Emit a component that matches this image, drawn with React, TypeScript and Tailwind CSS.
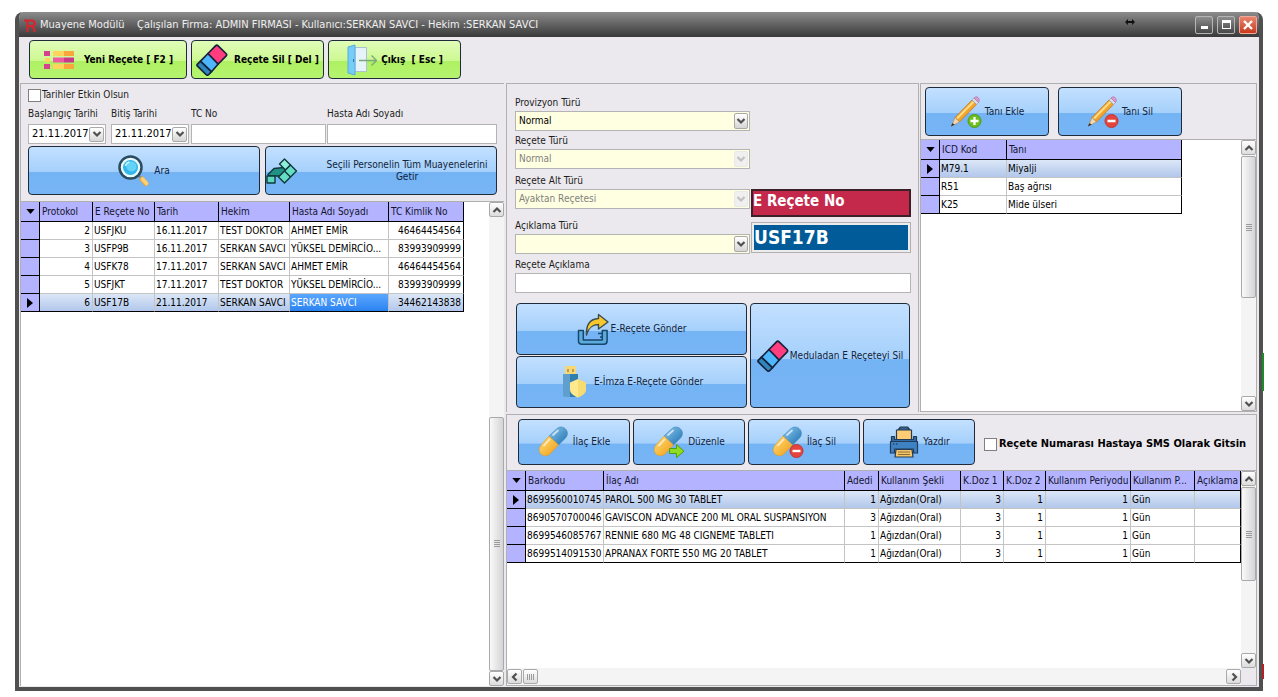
import { useId, type ReactNode } from "react";

const blueFill =
  "bg-[linear-gradient(180deg,#c3e0ff_0%,#a5d0fb_53%,#74b3f4_54%,#77b5f5_100%)]";
const greenFill =
  "bg-[linear-gradient(180deg,#e0fdb8_0%,#cdf892_53%,#aef062_54%,#b6f470_100%)]";

function GlossButton({
  icon,
  children,
  className = "",
  green = false,
}: {
  icon: ReactNode;
  children: ReactNode;
  className?: string;
  green?: boolean;
}) {
  return (
    <button
      type="button"
      className={`flex items-center justify-center rounded border border-[#1d2b3a] ${
        green ? greenFill + " font-bold text-black" : blueFill + " text-[#10233b]"
      } ${className}`}
    >
      {icon}
      {children}
    </button>
  );
}

function Chevron({ dir = "down", faded = false }: { dir?: "up" | "down" | "left" | "right"; faded?: boolean }) {
  const d = {
    down: "M1.5 3l3.5 3.5L8.500 3",
    up: "M1.5 7l3.500-3.500L8.500 7",
    left: "M6.500 1.500L3 5l3.500 3.500",
    right: "M3.500 1.500L7 5l-3.500 3.500",
  }[dir];
  return (
    <svg viewBox="0 0 10 10" className="size-[10px]" fill="none" stroke={faded ? "#c0c0c0" : "#505050"} strokeWidth="2.2">
      <path d={d} />
    </svg>
  );
}

function ScrollButton({ dir }: { dir: "up" | "down" | "left" | "right" }) {
  return (
    <button
      type="button"
      aria-label={dir}
      className="flex size-[15px] shrink-0 items-center justify-center rounded-xs border border-[#a9a9a9] bg-linear-to-b from-white to-[#dcdcdc]"
    >
      <Chevron dir={dir} />
    </button>
  );
}

function VScroll({ before, thumb }: { before: string; thumb: string }) {
  return (
    <div className="flex w-[15px] shrink-0 flex-col bg-[#f4f4f5]">
      <ScrollButton dir="up" />
      <div className={before} />
      <div
        className={`flex flex-col items-center justify-center gap-px rounded-xs border border-[#a9a9a9] bg-linear-to-r from-[#fafafa] to-[#d4d4d6] ${thumb}`}
      >
        <i className="h-px w-[6px] bg-[#9a9a9a]" />
        <i className="h-px w-[6px] bg-[#9a9a9a]" />
        <i className="h-px w-[6px] bg-[#9a9a9a]" />
        <i className="h-px w-[6px] bg-[#9a9a9a]" />
      </div>
      <div className="mt-auto">
        <ScrollButton dir="down" />
      </div>
    </div>
  );
}

type Column = { title: string; width: string; right?: boolean };

function DataGrid({
  columns,
  rows,
  current,
  focused = -1,
  className,
}: {
  columns: Column[];
  rows: string[][];
  current: number;
  focused?: number;
  className: string;
}) {
  return (
    <table className={`table-fixed border-separate border-spacing-0 text-black ${className}`}>
      <colgroup>
        <col className="w-[19px]" />
        {columns.map((c) => (
          <col key={c.title} className={c.width} />
        ))}
      </colgroup>
      <thead>
        <tr className="h-5 bg-[#b3b3ff] text-left text-[#14142e]">
          <th className="border-r border-b border-black p-0" aria-label="Menu">
            <svg viewBox="0 0 10 6" className="mx-auto h-[5px] w-[9px]">
              <path d="M0 0h10L5 6z" />
            </svg>
          </th>
          {columns.map((c) => (
            <th key={c.title} className="overflow-hidden border-r border-b border-black py-0 pr-0 pl-[2px] font-normal whitespace-nowrap">
              {c.title}
            </th>
          ))}
        </tr>
      </thead>
      <tbody>
        {rows.map((row, r) => {
          const last = r === rows.length - 1;
          const line = last ? "border-b-black" : "border-b-[#c4c4c4]";
          return (
            <tr
              key={r}
              className={`h-[18px] ${r === current ? "bg-linear-to-b from-[#dce7f7] to-[#afc5ea]" : "bg-white"}`}
            >
              <td className="border-r border-b border-black bg-[#b3b3ff] p-0">
                {r === current && (
                  <svg viewBox="0 0 6 10" className="mx-auto h-[10px] w-[6px]">
                    <path d="M0 0l6 5-6 5z" />
                  </svg>
                )}
              </td>
              {row.map((v, i) => (
                <td
                  key={i}
                  className={`overflow-hidden border-r border-b py-0 pl-px whitespace-nowrap ${line} ${
                    i === row.length - 1 ? "border-r-black" : "border-r-[#c4c4c4]"
                  } ${columns[i].right ? "pr-[2px] text-right" : "pr-0"} ${
                    r === current && i === focused ? "bg-linear-to-b from-[#5aa7ff] to-[#2a83f0] text-white" : ""
                  }`}
                >
                  {v}
                </td>
              ))}
            </tr>
          );
        })}
      </tbody>
    </table>
  );
}

function DateField({ label }: { label: string }) {
  const id = useId();
  return (
    <div className="flex w-[78px] flex-col gap-[2px]">
      <label htmlFor={id} className="whitespace-nowrap leading-4">
        {label}
      </label>
      <div className="flex h-5 items-center border border-[#b4b4b4] bg-white pr-px">
        <input id={id} defaultValue="21.11.2017" className="w-0 flex-1 pl-[3px] text-[11px] text-black outline-none" />
        <button
          type="button"
          aria-label={label + " seç"}
          className="flex size-[15px] items-center justify-center rounded-xs border border-[#a9a9a9] bg-linear-to-b from-white to-[#d6d6d6]"
        >
          <Chevron />
        </button>
      </div>
    </div>
  );
}

function TextField({ label, className = "gap-[2px]" }: { label: string; className?: string }) {
  const id = useId();
  return (
    <div className={`flex flex-col ${className}`}>
      <label htmlFor={id} className="leading-4">
        {label}
      </label>
      <input id={id} className="h-5 w-full border border-[#b4b4b4] bg-white px-1 outline-none" />
    </div>
  );
}

function Combo({ label, value, disabled = false }: { label: string; value: string; disabled?: boolean }) {
  const id = useId();
  return (
    <div className="flex flex-col">
      <label htmlFor={id} className="leading-4">
        {label}
      </label>
      <div className="relative">
        <select
          id={id}
          disabled={disabled}
          defaultValue={value}
          className="block h-5 w-full appearance-none border border-[#b4b4b4] bg-[#ffffe1] pl-[3px] text-black opacity-100 outline-none disabled:text-[#7f7f7f]"
        >
          <option value={value}>{value}</option>
        </select>
        <span
          className={`pointer-events-none absolute top-[2px] right-[2px] flex h-4 w-[14px] items-center justify-center rounded-xs border ${
            disabled ? "border-[#e8e8e8] bg-[#f0f0f0]" : "border-[#a9a9a9] bg-linear-to-b from-white to-[#d6d6d6]"
          }`}
        >
          <Chevron faded={disabled} />
        </span>
      </div>
    </div>
  );
}

function ListIcon() {
  return (
    <svg viewBox="0 0 32 20" className="h-5 w-8 shrink-0">
      <path fill="#d6418f" d="M1 1h6v5H1zM1 14h6v5H1z" />
      <path fill="#ffd45c" d="M2 8h5v4H2zM10 1h11v5H10zM10 14h11v5H10z" />
      <path fill="#f9a63a" d="M21 1h10v5H21zM21 14h10v5H21z" />
      <path fill="#ef5ba1" d="M10 7.500h11v5H10z" />
      <path fill="#c9388b" d="M21 7.500h10v5H21z" />
    </svg>
  );
}

function EraserIcon() {
  return (
    <svg viewBox="0 0 32 32" className="size-8 shrink-0" stroke="#16213a" strokeWidth="1.700" strokeLinejoin="round">
      <path fill="#2f86bd" d="M4.500 17.200l-3 3c-.6.600-.6 1.400 0 2l8.500 8.300c.8.800 2 .8 2.800 0l2.700-2.800z" />
      <path fill="#4eb5ff" d="M12 9.500L4.500 17.200l11 10.500L22.200 20z" />
      <path fill="#ff3d7f" d="M12 9.500l7.500-7.700c.8-.8 1.800-.8 2.600 0l7.900 7.700c.8.800.8 1.800 0 2.600L22.200 20z" />
    </svg>
  );
}

function DoorIcon() {
  return (
    <svg viewBox="0 0 32 32" className="size-8 shrink-0">
      <path fill="#e6f3f8" stroke="#a9c4d0" d="M9 3.500h11.500v24H9z" />
      <path fill="#76cdf8" stroke="#58abdb" d="M2 3l7-2v30l-7-2z" />
      <path stroke="#31789f" d="M7.500 15v3" />
      <path fill="none" stroke="#7da877" strokeWidth="1.400" d="M13 16.500h17M25.500 11.500l5 5-5 5" />
    </svg>
  );
}

function SearchIcon() {
  return (
    <svg viewBox="0 0 32 32" className="size-8 shrink-0">
      <path stroke="#e7a940" strokeWidth="5" strokeLinecap="round" d="M24 24l4 4.500" />
      <path stroke="#ffd177" strokeWidth="3.500" strokeLinecap="round" d="M24.500 24l4 4.500" />
      <path stroke="#7890a0" strokeWidth="3" d="M19 19l3.500 3.500" />
      <circle cx="12.500" cy="12.500" r="11" fill="#e9fbff" stroke="#2b4c60" strokeWidth="2.500" />
      <circle cx="12.500" cy="12.500" r="7.500" fill="#35b7ea" />
      <circle cx="13.500" cy="11.500" r="5" fill="#65d3f8" />
      <path d="M7.500 11c.5-2.500 2-3.500 4-4" fill="none" stroke="#c9f2ff" strokeWidth="1.500" />
    </svg>
  );
}

function BlocksIcon() {
  return (
    <svg viewBox="0 0 32 26" className="h-[26px] w-8 shrink-0" stroke="#11383b" strokeWidth="1.400" strokeLinejoin="round">
      <path fill="#209184" d="M8 10.500L18 9.500l2 3-5.500 5.500H3l-1-1.500z" />
      <path fill="#5bd8bd" d="M1 18h8v7H1z" />
      <path fill="#8bf0da" d="M13.500 6l5-5 6 6-5 5z" />
      <path fill="#64ddc3" d="M24.500 7l6 6-12 12-6-6z" />
      <path fill="none" d="M18.500 13l6 6" />
    </svg>
  );
}

function ShareIcon() {
  return (
    <svg viewBox="0 0 32 32" className="size-8 shrink-0" strokeLinejoin="round">
      <path fill="#5cabdf" stroke="#174769" strokeWidth="1.500" d="M1.500 17.500h4.800V27h19v-9.500h4.800V28c0 2-1.200 3.200-3.200 3.200H5c-2.200 0-3.500-1.200-3.500-3.200z" />
      <path fill="none" stroke="#174769" strokeWidth="1.300" d="M21 20.500h4M23 24h2.500" />
      <path fill="#f7c72d" stroke="#3d4d4f" strokeWidth="1.400" d="M9.500 22C9 12 13 6 21.500 5.500V1.500L31 9l-9.500 7v-4.500C15.500 11.500 12 14 9.500 22z" />
    </svg>
  );
}

function UsbShieldIcon() {
  return (
    <svg viewBox="0 0 32 32" className="size-8 shrink-0">
      <path fill="#f4d776" d="M5 0h11v9H5z" />
      <path fill="#c39b52" d="M7 3h2v3H7zM12 3h2v3h-2z" />
      <path fill="#5f9fce" d="M3 8h7v23H5c-1 0-2-1-2-2z" />
      <path fill="#2f7eac" d="M10 8h8v23h-8z" />
      <path fill="#f6dc71" d="M18 13l8 3.500v7c0 4-4 6.500-8 8z" />
      <path fill="#ffe98e" d="M18 13l-8 3.500v7c0 4 4 6.500 8 8z" />
    </svg>
  );
}

function MinusBadge() {
  return (
    <g>
      <circle cx="24.500" cy="25" r="6.500" fill="#e5443c" stroke="#c13430" />
      <path stroke="#fff" strokeWidth="2.400" d="M20.500 25h8" />
    </g>
  );
}

function PillIcon({ badge }: { badge?: "edit" | "minus" }) {
  const id = useId();
  return (
    <svg viewBox="0 0 32 32" className="size-8 shrink-0">
      <defs>
        <linearGradient id={id + "b"} x1="0" y1="0" x2="1" y2="1">
          <stop offset="0" stopColor="#8ec9f0" />
          <stop offset="1" stopColor="#1b6fae" />
        </linearGradient>
        <linearGradient id={id + "y"} x1="0" y1="0" x2="1" y2="1">
          <stop offset="0" stopColor="#ffe07a" />
          <stop offset="1" stopColor="#f09a14" />
        </linearGradient>
      </defs>
      <path fill={"url(#" + id + "b)"} stroke="#3f83b5" strokeWidth=".600" d="M11 10l7.500-7c3-2.700 6.500-2.500 9 0 2.600 2.600 2.600 6.200 0 9L20.500 19z" />
      <path fill={"url(#" + id + "y)"} stroke="#d99a2c" strokeWidth=".600" d="M11 10l9.500 9-8 8.500c-2.800 2.900-7 3-9.500.5s-2.300-6.500.5-9.500z" />
      <path stroke="#fff" strokeOpacity=".650" strokeWidth="1.800" strokeLinecap="round" d="M6 19.500l5.500-6M15 9l5-4.500" />
      {badge === "minus" && <MinusBadge />}
      {badge === "edit" && (
        <path fill="#8fdc25" stroke="#579b10" d="M16.500 22.500h7v-4l7.500 6.700-7.500 6.300v-4h-7z" />
      )}
    </svg>
  );
}

function PencilIcon({ badge }: { badge: "plus" | "minus" }) {
  return (
    <svg viewBox="0 0 32 32" className="size-8 shrink-0">
      <path fill="#f2a32c" stroke="#b87723" strokeWidth=".700" d="M5 21.500L22 4l4.500 4.500L9.500 26z" />
      <path stroke="#ffdc85" strokeWidth="2" d="M7 22.500L23.800 5.500" />
      <path fill="#d8dce4" stroke="#8e93a0" strokeWidth=".600" d="M22 4l2-2 4.500 4.500-2 2z" />
      <path fill="#dd9bd0" stroke="#a9689f" strokeWidth=".600" d="M24 2c1.500-1.500 3-1.500 4.200-.3s1.500 3 .3 4.800z" />
      <path fill="#f5d8ac" stroke="#a88358" strokeWidth=".600" d="M5 21.500L9.500 26l-8 4z" />
      <path fill="#333" d="M2.600 27l2 1.800L.800 30.500z" />
      {badge === "minus" ? (
        <MinusBadge />
      ) : (
        <g>
          <circle cx="24.500" cy="25" r="6.500" fill="#6cbf1e" stroke="#4f9a12" />
          <path stroke="#fff" strokeWidth="2.300" d="M20.500 25h8M24.500 21v8" />
        </g>
      )}
    </svg>
  );
}

function PrinterIcon() {
  return (
    <svg viewBox="0 0 32 32" className="size-8 shrink-0" stroke="#233b54" strokeWidth="1.200" strokeLinejoin="round">
      <path fill="#35618b" d="M10 4l2.500-3h7L22 4v5H10z" />
      <path fill="#ffcb74" d="M8.500 4h15v9.500h-15z" />
      <path fill="#2f6ca8" d="M3.500 10.500h3v3h19v-3h3v5h-25z" />
      <path fill="#3f82c4" d="M2.500 15.500h27V27h-4v-4H6.500v4h-4z" />
      <path d="M5 18h1.500M8 18h1.500" stroke="#16304a" />
      <path fill="#f4c66c" d="M8 23.500h16l1 7.500H7z" />
      <path fill="none" stroke="#8e6d38" d="M10 26h12M10 28.500h12" />
    </svg>
  );
}

const visitColumns: Column[] = [
  { title: "Protokol", width: "w-[53px]", right: true },
  { title: "E Reçete No", width: "w-[62px]" },
  { title: "Tarih", width: "w-[64px]" },
  { title: "Hekim", width: "w-[71px]" },
  { title: "Hasta Adı Soyadı", width: "w-[99px]" },
  { title: "TC Kimlik No", width: "w-[75px]", right: true },
];
const visits = [
  ["2", "USFJKU", "16.11.2017", "TEST DOKTOR", "AHMET EMİR", "46464454564"],
  ["3", "USFP9B", "16.11.2017", "SERKAN SAVCI", "YÜKSEL DEMİRCİO...", "83993909999"],
  ["4", "USFK78", "17.11.2017", "SERKAN SAVCI", "AHMET EMİR", "46464454564"],
  ["5", "USFJKT", "17.11.2017", "TEST DOKTOR", "YÜKSEL DEMİRCİO...", "83993909999"],
  ["6", "USF17B", "21.11.2017", "SERKAN SAVCI", "SERKAN SAVCI", "34462143838"],
];

const diagnosisColumns: Column[] = [
  { title: "ICD Kod", width: "w-[67px]" },
  { title: "Tanı", width: "w-[175px]" },
];
const diagnoses = [
  ["M79.1", "Miyalji"],
  ["R51", "Baş ağrısı"],
  ["K25", "Mide ülseri"],
];

const drugColumns: Column[] = [
  { title: "Barkodu", width: "w-[78px]" },
  { title: "İlaç Adı", width: "w-[241px]" },
  { title: "Adedi", width: "w-[34px]", right: true },
  { title: "Kullanım Şekli", width: "w-[82px]" },
  { title: "K.Doz 1", width: "w-[43px]", right: true },
  { title: "K.Doz 2", width: "w-[42px]", right: true },
  { title: "Kullanım Periyodu", width: "w-[85px]", right: true },
  { title: "Kullanım P...", width: "w-[64px]" },
  { title: "Açıklama", width: "w-auto" },
];
const drugs = [
  ["8699560010745", "PAROL 500 MG 30 TABLET", "1", "Ağızdan(Oral)", "3", "1", "1", "Gün", ""],
  ["8690570700046", "GAVISCON ADVANCE 200 ML ORAL SUSPANSIYON", "3", "Ağızdan(Oral)", "3", "1", "1", "Gün", ""],
  ["8699546085767", "RENNIE 680 MG 48 CIGNEME TABLETI", "1", "Ağızdan(Oral)", "3", "1", "1", "Gün", ""],
  ["8699514091530", "APRANAX FORTE 550 MG 20 TABLET", "1", "Ağızdan(Oral)", "3", "1", "1", "Gün", ""],
];

const windowButton =
  "flex size-[18px] items-center justify-center rounded-xs border border-[#b5b5b5] bg-linear-to-b from-[#8d8d8d] to-[#484848]";

function TitleBar() {
  return (
    <header className="flex h-[25px] shrink-0 items-center bg-linear-to-b from-[#8c8c8c] via-[#626262] to-[#3a3a3a] pr-[2px] pl-[5px] text-[11px] text-[#f0f0f0]">
      <svg viewBox="0 0 12 14" className="mr-1 h-[14px] w-3" fill="none" stroke="#d8242f" strokeWidth="2.200">
        <path d="M3.500 14V2.500H8a2.700 2.700 0 0 1 0 5.500H4M7.500 8l2.800 3v3M0 2.500h4" />
      </svg>
      <h1 className="whitespace-pre">
        {"Muayene Modülü    Çalışılan Firma: ADMIN FIRMASI - Kullanıcı:SERKAN SAVCI - Hekim :SERKAN SAVCI"}
      </h1>
      <svg viewBox="0 0 10 6" className="mr-[60px] mb-[6px] ml-auto h-[6px] w-[10px]">
        <path d="M0 3l3-3v2h4V0l3 3-3 3V4H3v2z" fill="#111" />
      </svg>
      <div className="flex gap-1">
        <button type="button" aria-label="Küçült" className={windowButton}>
          <i className="mt-[6px] h-[3px] w-[7px] bg-white" />
        </button>
        <button type="button" aria-label="Büyüt" className={windowButton}>
          <i className="h-[9px] w-[9px] border border-t-[3px] border-white" />
        </button>
        <button
          type="button"
          aria-label="Kapat"
          className="flex size-[18px] items-center justify-center rounded-xs border border-[#f0a898] bg-linear-to-b from-[#e8846c] to-[#c8371b]"
        >
          <svg viewBox="0 0 10 10" className="size-[10px]" stroke="#fff" strokeWidth="2.400">
            <path d="M1 1l8 8M9 1L1 9" />
          </svg>
        </button>
      </div>
    </header>
  );
}

function VisitPanel() {
  return (
    <section className="flex w-[484px] shrink-0 flex-col border-t border-l border-[#b0b0b0]">
      <div className="flex h-[118px] shrink-0 flex-col border-b border-[#b0b0b0] pt-1 pr-[7px] pl-[7px]">
        <label className="flex h-[14px] items-center gap-px">
          <input type="checkbox" className="size-[13px] appearance-none border border-[#808080] bg-white" />
          Tarihler Etkin Olsun
        </label>
        <div className="mt-1 flex">
          <DateField label="Başlangıç Tarihi" />
          <div className="w-[5px]" />
          <DateField label="Bitiş Tarihi" />
          <TextField label="TC No" className="ml-[2px] w-[135px] gap-[2px]" />
          <TextField label="Hasta Adı Soyadı" className="ml-px flex-1 gap-[2px]" />
        </div>
        <div className="mt-[2px] grid grid-cols-2 gap-[5px]">
          <GlossButton icon={<SearchIcon />} className="h-[49px] gap-1">
            Ara
          </GlossButton>
          <GlossButton icon={<BlocksIcon />} className="h-[49px] leading-3">
            <span className="flex-1 pl-5">Seçili Personelin Tüm Muayenelerini Getir</span>
          </GlossButton>
        </div>
      </div>
      <div className="flex min-h-0 flex-1 bg-white">
        <div className="min-w-0 flex-1">
          <DataGrid className="w-[443px]" columns={visitColumns} rows={visits} current={4} focused={4} />
        </div>
        <VScroll before="flex-[201]" thumb="flex-[254]" />
      </div>
    </section>
  );
}

function PrescriptionForm() {
  return (
    <section className="flex w-[413px] shrink-0 flex-col border-t border-r border-l border-[#b0b0b0] pt-[11px] pr-[7px] pl-2">
      <div className="flex">
        <div className="flex w-[235px] flex-col">
          <Combo label="Provizyon Türü" value="Normal" />
          <div className="h-[2px]" />
          <Combo label="Reçete Türü" value="Normal" disabled />
          <div className="h-1" />
          <Combo label="Reçete Alt Türü" value="Ayaktan Reçetesi" disabled />
          <div className="h-[9px]" />
          <Combo label="Açıklama Türü" value="" />
        </div>
        <div className="flex flex-1 flex-col justify-end gap-[5px] pb-px pl-px font-bold text-white">
          <div className="h-7 border-2 border-[#3c2028] bg-[#c4294c] text-[15px] leading-5">E Reçete No</div>
          <div className="border border-[#b0b0b0] bg-[#ececec] p-[2px]">
            <div className="h-[25px] bg-[#005b98] text-[19px] leading-6">USF17B</div>
          </div>
        </div>
      </div>
      <TextField label="Reçete Açıklama" className="mt-[3px]" />
      <div className="mt-[10px] flex gap-[3px] pr-px pl-px">
        <div className="flex flex-1 flex-col gap-px">
          <GlossButton icon={<ShareIcon />} className="h-[52px] gap-[2px]">
            E-Reçete Gönder
          </GlossButton>
          <GlossButton icon={<UsbShieldIcon />} className="h-[52px] gap-[2px]">
            E-İmza E-Reçete Gönder
          </GlossButton>
        </div>
        <GlossButton icon={<EraserIcon />} className="w-[160px] gap-px whitespace-nowrap">
          Meduladan E Reçeteyi Sil
        </GlossButton>
      </div>
    </section>
  );
}

function DiagnosisPanel() {
  return (
    <section className="flex min-w-0 flex-1 flex-col border-t border-r border-l border-[#b0b0b0]">
      <div className="flex h-14 shrink-0 gap-[9px] border-b border-[#b0b0b0] pt-[3px] pl-1">
        <GlossButton icon={<PencilIcon badge="plus" />} className="h-[49px] w-[124px] gap-[3px]">
          Tanı Ekle
        </GlossButton>
        <GlossButton icon={<PencilIcon badge="minus" />} className="h-[49px] w-[124px] gap-[3px]">
          Tanı Sil
        </GlossButton>
      </div>
      <div className="flex min-h-0 flex-1 border-b border-[#b0b0b0] bg-white">
        <div className="min-w-0 flex-1">
          <DataGrid className="w-[261px]" columns={diagnosisColumns} rows={diagnoses} current={0} />
        </div>
        <VScroll before="h-px" thumb="h-[142px]" />
      </div>
    </section>
  );
}

function DrugPanel() {
  return (
    <section className="flex min-h-0 flex-1 flex-col border border-[#b0b0b0]">
      <div className="flex h-14 shrink-0 items-start gap-[3px] border-b border-[#b0b0b0] pt-1 pl-[11px]">
        <GlossButton icon={<PillIcon />} className="h-[46px] w-[112px] gap-[3px]">
          İlaç Ekle
        </GlossButton>
        <GlossButton icon={<PillIcon badge="edit" />} className="h-[46px] w-[112px] gap-[3px]">
          Düzenle
        </GlossButton>
        <GlossButton icon={<PillIcon badge="minus" />} className="h-[46px] w-[112px] gap-[3px]">
          İlaç Sil
        </GlossButton>
        <GlossButton icon={<PrinterIcon />} className="h-[46px] w-[112px] gap-[3px]">
          Yazdır
        </GlossButton>
        <label className="ml-[6px] flex h-[50px] items-center gap-[2px] text-[11px] font-bold whitespace-nowrap text-black">
          <input type="checkbox" className="size-[13px] appearance-none border border-[#808080] bg-white" />
          Reçete Numarası Hastaya SMS Olarak Gitsin
        </label>
      </div>
      <div className="flex min-h-0 flex-1">
        <div className="flex min-w-0 flex-1 flex-col">
          <div className="min-h-0 flex-1 bg-white">
            <DataGrid className="w-full" columns={drugColumns} rows={drugs} current={0} />
          </div>
          <div className="flex h-[17px] items-center bg-[#f4f4f5]">
            <ScrollButton dir="left" />
            <div className="ml-px flex h-[15px] w-[15px] items-center justify-center gap-px rounded-xs border border-[#a9a9a9] bg-linear-to-b from-white to-[#dcdcdc]">
              <i className="h-[6px] w-px bg-[#9a9a9a]" />
              <i className="h-[6px] w-px bg-[#9a9a9a]" />
              <i className="h-[6px] w-px bg-[#9a9a9a]" />
              <i className="h-[6px] w-px bg-[#9a9a9a]" />
            </div>
            <div className="ml-auto">
              <ScrollButton dir="right" />
            </div>
          </div>
        </div>
        <div className="flex pb-[17px]">
          <VScroll before="h-px" thumb="h-[94px]" />
        </div>
      </div>
    </section>
  );
}

export default function App() {
  return (
    <div className="relative flex h-screen flex-col bg-white px-[15px] pt-3 pb-[6px] font-['DejaVu_Sans_Condensed','DejaVu_Sans',sans-serif] text-[10px] leading-[14px] text-[#1c1c1c]">
      <i className="absolute top-[353px] right-[14px] h-[38px] w-[2px] bg-[#1f8a2c]" />
      <i className="absolute top-[664px] right-[14px] h-[15px] w-[2px] bg-[#b3202a]" />
      <div className="flex min-h-0 flex-1 flex-col overflow-hidden rounded-t-lg border-x-4 border-b-4 border-[#505050]">
        <TitleBar />
        <main className="flex min-h-0 flex-1 flex-col bg-[#ebe9ed] pr-[2px] pb-px pl-px">
          <div className="flex h-[46px] shrink-0 items-start gap-1 pt-[3px] pl-[9px]">
            <GlossButton green icon={<ListIcon />} className="h-[39px] w-[158px] gap-[9px]">
              Yeni Reçete [ F2 ]
            </GlossButton>
            <GlossButton green icon={<EraserIcon />} className="h-[39px] w-[133px] gap-[6px] whitespace-nowrap">
              Reçete Sil [ Del ]
            </GlossButton>
            <GlossButton green icon={<DoorIcon />} className="h-[39px] w-[133px] gap-[3px] whitespace-pre">
              {"Çıkış  [ Esc ]"}
            </GlossButton>
          </div>
          <div className="flex min-h-0 flex-1 gap-[2px]">
            <VisitPanel />
            <div className="flex min-w-0 flex-1 flex-col gap-[2px]">
              <div className="flex h-[329px] shrink-0 gap-px">
                <PrescriptionForm />
                <DiagnosisPanel />
              </div>
              <DrugPanel />
            </div>
          </div>
        </main>
      </div>
    </div>
  );
}
